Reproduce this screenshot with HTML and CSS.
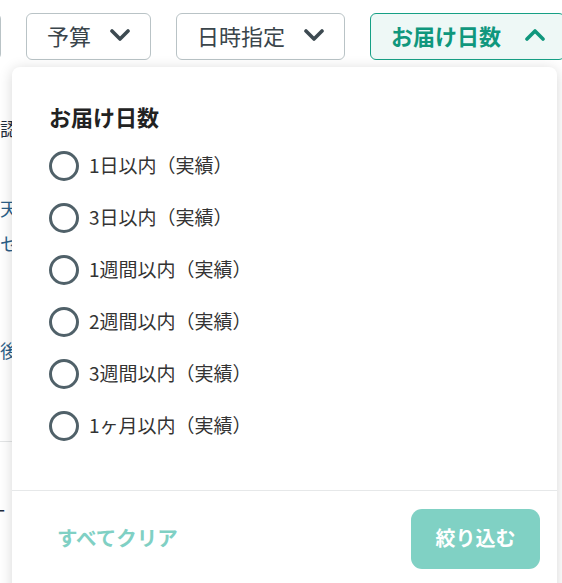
FILE: index.html
```html
<!DOCTYPE html>
<html lang="ja">
<head>
<meta charset="utf-8">
<title>お届け日数</title>
<link rel="stylesheet" href="styles.css">
</head>
<body>
<div class="page">
  <div class="filter-bar">
    <button class="chip chip-hidden">価格帯<svg class="chev" viewBox="0 0 20 12"><path d="M2 2 L10 10 L18 2"/></svg></button>
    <button class="chip">予算<svg class="chev" viewBox="0 0 20 12"><path d="M2 2 L10 10 L18 2"/></svg></button>
    <button class="chip">日時指定<svg class="chev" viewBox="0 0 20 12"><path d="M2 2 L10 10 L18 2"/></svg></button>
    <button class="chip chip-active">お届け日数<svg class="chev" viewBox="0 0 20 12"><path d="M2 10 L10 2 L18 10"/></svg></button>
  </div>

  <div class="results">
    <div class="result-left">
      <p class="frag f1">確認</p>
      <p class="frag f2 blue">晴天</p>
      <p class="frag f3 blue">・セット</p>
      <p class="frag f4 blue">最後</p>
      <hr class="bg-line">
      <p class="frag f5">ー</p>
    </div>
    <div class="result-right">
      <span class="thumb"></span>
      <p class="bracket">]</p>
      <hr class="bg-line">
    </div>
  </div>

  <div class="dropdown">
    <div class="dropdown-body">
      <h2 class="dropdown-title">お届け日数</h2>
      <ul class="options">
        <li class="option"><span class="radio"></span><span class="label">1日以内（実績）</span></li>
        <li class="option"><span class="radio"></span><span class="label">3日以内（実績）</span></li>
        <li class="option"><span class="radio"></span><span class="label">1週間以内（実績）</span></li>
        <li class="option"><span class="radio"></span><span class="label">2週間以内（実績）</span></li>
        <li class="option"><span class="radio"></span><span class="label">3週間以内（実績）</span></li>
        <li class="option"><span class="radio"></span><span class="label">1ヶ月以内（実績）</span></li>
      </ul>
    </div>
    <div class="dropdown-footer">
      <button class="clear-btn">すべてクリア</button>
      <button class="apply-btn">絞り込む</button>
    </div>
  </div>
</div>
</body>
</html>
```

FILE: styles.css
```css
* { box-sizing: border-box; }

html, body {
  margin: 0;
  padding: 0;
  background: #ffffff;
}

body {
  width: 562px;
  height: 583px;
  overflow: hidden;
  font-family: "Noto Sans CJK JP", "Noto Sans", sans-serif;
  color: #333;
}

.page {
  position: relative;
  width: 562px;
  height: 583px;
  overflow: hidden;
}

.filter-bar {
  display: flex;
  gap: 25px;
  padding-top: 13px;
  margin-left: -95px;
  white-space: nowrap;
}

.chip {
  display: flex;
  align-items: center;
  gap: 19px;
  height: 47px;
  padding: 0 20px 4px 20px;
  border: 1px solid #b9c3c6;
  border-radius: 6px;
  background: #fff;
  font-family: inherit;
  font-size: 22px;
  color: #3a454b;
  flex-shrink: 0;
}

.chip-hidden { width: 96px; overflow: hidden; }

.chev {
  width: 20px;
  height: 12px;
  flex-shrink: 0;
  fill: none;
  stroke: #3d4a51;
  stroke-width: 3.6;
  stroke-linecap: round;
  stroke-linejoin: round;
}

.chip-active {
  border-color: #16a085;
  background: #eef8f6;
  color: #10977d;
  font-weight: 700;
  gap: 24px;
  padding-left: 20px;
  padding-right: 19px;
}

.chip-active .chev { stroke: #10977d; }

/* background content behind the dropdown */
.results {
  display: flex;
  justify-content: space-between;
}

.result-left {
  width: 120px;
  margin-left: -18px;
}

.frag {
  margin: 0;
  font-size: 18px;
  line-height: 18px;
  color: #1f2d3d;
  white-space: nowrap;
}

.frag.blue { color: #2d5f88; }
.f1 { margin-top: 59px; }
.f2 { margin-top: 62px; }
.f3 { margin-top: 17px; }
.f4 { margin-top: 89px; }
.f5 { margin-top: 59px; margin-left: 6px; color: #1f2d3d; }

.bg-line {
  margin: 82px 0 0;
  border: 0;
  border-top: 1px solid #e3e5e6;
}

.result-right {
  width: 40px;
  margin-right: -30px;
  padding-left: 24px;
}

.thumb {
  display: block;
  width: 26px;
  height: 26px;
  margin-top: 268px;
  border-radius: 50%;
  background: #a9bdc5;
}

.bracket {
  margin: 40px 0 0;
  font-size: 16px;
  line-height: 18px;
  color: #3b2a10;
}

.result-right .bg-line { margin-top: 22px; }

/* dropdown panel */
.dropdown {
  position: absolute;
  top: 67px;
  left: 12px;
  width: 545px;
  height: 560px;
  background: #fff;
  border-radius: 8px;
  box-shadow: 0 2px 14px rgba(0, 0, 0, 0.16);
}

.dropdown-body {
  padding: 37px 0 38px 37px;
  border-bottom: 1px solid #e6e8e9;
}

.dropdown-title {
  margin: 0 0 11px;
  font-size: 22px;
  line-height: 25px;
  font-weight: 700;
  color: #222;
}

.options {
  list-style: none;
  margin: 0;
  padding: 0;
}

.option {
  display: flex;
  align-items: center;
  gap: 10px;
  height: 52px;
}

.radio {
  width: 30px;
  height: 30px;
  border: 3px solid #506169;
  border-radius: 50%;
  flex-shrink: 0;
}

.label {
  font-size: 19px;
  line-height: 24px;
  padding-bottom: 3px;
  color: #333;
}

.dropdown-footer {
  display: flex;
  align-items: center;
  justify-content: space-between;
  padding: 18px 17px 0 45px;
}

.clear-btn {
  border: 0;
  background: none;
  padding: 0 0 5px;
  font-family: inherit;
  font-size: 20.5px;
  font-weight: 700;
  color: #80d0c4;
}

.apply-btn {
  width: 129px;
  height: 60px;
  padding: 0 0 3px;
  border: 0;
  border-radius: 11px;
  background: #80d1c4;
  font-family: inherit;
  font-size: 20px;
  font-weight: 700;
  color: #fff;
}
```
